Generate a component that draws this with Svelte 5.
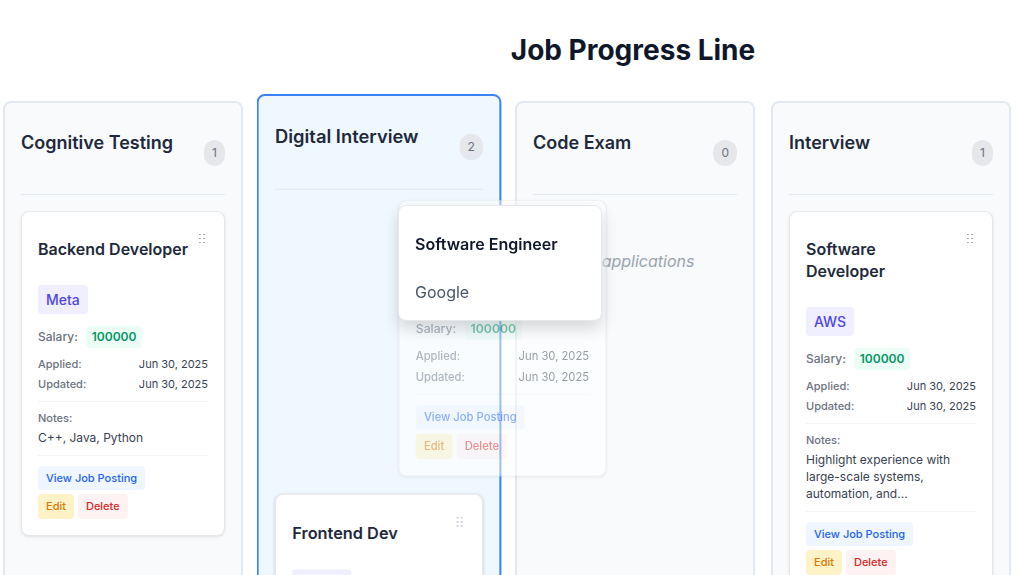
<script>
  const columns = [
    {
      title: 'Cognitive Testing',
      jobs: [
        { title: 'Backend Developer', company: 'Meta', salary: '100000', date: 'Jun 30, 2025', notes: 'C++, Java, Python' }
      ]
    },
    {
      title: 'Digital Interview',
      over: true,
      jobs: [
        { title: 'Software Engineer', company: 'Google', salary: '100000', date: 'Jun 30, 2025', dragging: true },
        { title: 'Frontend Dev', company: 'Nvidia', salary: '100000', date: 'Jun 30, 2025' }
      ]
    },
    { title: 'Code Exam', jobs: [] },
    {
      title: 'Interview',
      jobs: [
        {
          title: 'Software Developer',
          company: 'AWS',
          salary: '100000',
          date: 'Jun 30, 2025',
          notes: 'Highlight experience with large-scale systems, automation, and...'
        }
      ]
    }
  ];
</script>

<main>
  <h1>Job Progress Line</h1>
  <div class="board">
    {#each columns as column}
      <section class="column" class:over={column.over}>
        <header>
          <h2>{column.title}</h2>
          <span class="count">{column.jobs.length}</span>
        </header>
        <div class="list">
          {#each column.jobs as job}
            <article class="card" class:dragging={job.dragging}>
              <div class="card-head">
                <h3>{job.title}</h3>
                <svg class="grip" viewBox="0 0 8 10" width="8" height="10" aria-hidden="true">
                  {#each [0, 4, 8] as y}
                    <rect x="1" {y} width="2" height="1" />
                    <rect x="5" {y} width="2" height="1" />
                  {/each}
                </svg>
              </div>
              <span class="company">{job.company}</span>
              <div class="salary">
                <span>Salary:</span>
                <strong>{job.salary}</strong>
              </div>
              <dl>
                <div><dt>Applied:</dt><dd>{job.date}</dd></div>
                <div><dt>Updated:</dt><dd>{job.date}</dd></div>
              </dl>
              {#if job.notes}
                <div class="notes">
                  <span>Notes:</span>
                  <p>{job.notes}</p>
                </div>
              {/if}
              <div class="actions">
                <a href="#posting">View Job Posting</a>
                <div class="buttons">
                  <button class="edit" type="button">Edit</button>
                  <button class="delete" type="button">Delete</button>
                </div>
              </div>
            </article>
          {:else}
            <p class="empty">No applications</p>
          {/each}
        </div>
      </section>
    {/each}
    <div class="drag-preview">
      <h3>Software Engineer</h3>
      <p>Google</p>
    </div>
  </div>
</main>

<style>
  :global(html) {
    overflow: hidden;
  }
  :global(body) {
    margin: 0;
    background: #fff;
    font-family: Inter, 'Liberation Sans', sans-serif;
  }
  h1, h2, h3, p, dl, dd {
    margin: 0;
  }
  main {
    padding: 32px 7px 0 3px;
  }
  h1 {
    margin: 0 0 33px 252px;
    font-size: 28px;
    line-height: 36px;
    font-weight: 700;
    text-align: center;
    color: #0f172a;
  }
  .board {
    position: relative;
    display: grid;
    grid-template-columns: repeat(4, minmax(0, 1fr));
    gap: 16px;
  }
  .column {
    box-sizing: border-box;
    min-height: 700px;
    padding: 16px;
    border: 2px solid #e2e8f0;
    border-radius: 8px;
    background: #f8fafc;
  }
  .over {
    z-index: 1;
    border-color: #3b82f6;
    background: #f0f8ff;
    transform: scale(1.02);
  }
  header {
    display: flex;
    align-items: center;
    justify-content: space-between;
    padding-bottom: 8px;
    margin-bottom: 16px;
    border-bottom: 1px solid #e2e8f0;
  }
  h2 {
    margin: 10px 0 30px;
    font-size: 18px;
    line-height: 27px;
    font-weight: 600;
    color: #1e293b;
  }
  .count {
    padding: 4px 8px;
    border-radius: 12px;
    background: #e5e7eb;
    font-size: 12px;
    line-height: 18px;
    color: #6b7280;
  }
  .list {
    display: flex;
    flex-direction: column;
    gap: 11px;
  }
  .card {
    padding: 16px;
    border: 1px solid #e5e7eb;
    border-radius: 8px;
    background: #fff;
    box-shadow: 0 1px 3px rgba(0, 0, 0, 0.1);
  }
  .dragging {
    opacity: 0.5;
    transform: translate(121px, -6px);
  }
  .card-head {
    display: flex;
    justify-content: space-between;
    gap: 8px;
    margin-bottom: 25px;
  }
  h3 {
    font-size: 16px;
    line-height: 22px;
    font-weight: 600;
    color: #1e293b;
  }
  .card-head h3 {
    margin-top: 10px;
  }
  .grip {
    flex: none;
    margin: 6px 2px 0 0;
    fill: #a3adbd;
  }
  .company {
    display: block;
    width: fit-content;
    padding: 6px 8px;
    border-radius: 4px;
    background: #f0efff;
    font-size: 14px;
    line-height: 17px;
    font-weight: 500;
    color: #4f46e5;
  }
  .salary {
    display: flex;
    align-items: center;
    gap: 8px;
    margin: 12px 0 8px;
    font-size: 12px;
    line-height: 18px;
    font-weight: 500;
    color: #6b7280;
  }
  .salary strong {
    padding: 2px 6px;
    border-radius: 4px;
    background: #ecfdf5;
    font-weight: 600;
    color: #059669;
  }
  dl {
    display: grid;
    gap: 4px;
    margin-bottom: 9px;
    font-size: 11px;
    line-height: 16px;
  }
  dl div {
    display: flex;
    justify-content: space-between;
  }
  dt, .notes span {
    font-weight: 500;
    color: #6b7280;
  }
  dd {
    color: #374151;
  }
  .notes {
    padding: 8px 0 9px;
    border-top: 1px solid #f3f4f6;
  }
  .notes span {
    display: block;
    margin-bottom: 3px;
    font-size: 11px;
    line-height: 16px;
  }
  .notes p {
    font-size: 12px;
    line-height: 17px;
    color: #374151;
  }
  .actions {
    display: grid;
    gap: 4px;
    justify-items: start;
    padding-top: 10px;
    border-top: 1px solid #f3f4f6;
  }
  .buttons {
    display: flex;
    gap: 4px;
  }
  a, button {
    padding: 4px 8px;
    border: 0;
    border-radius: 4px;
    font-family: inherit;
    font-size: 11px;
    line-height: 16px;
    font-weight: 500;
    text-decoration: none;
  }
  button {
    line-height: 17px;
  }
  a {
    background: #eff6ff;
    color: #2563eb;
  }
  .edit {
    background: #fef3c7;
    color: #d97706;
  }
  .delete {
    background: #fef2f2;
    color: #dc2626;
  }
  .empty {
    margin-top: 38px;
    font-size: 16px;
    line-height: 24px;
    font-style: italic;
    text-align: center;
    color: #9ca3af;
  }
  .drag-preview {
    position: absolute;
    z-index: 2;
    top: 104px;
    left: 395px;
    box-sizing: border-box;
    width: 204px;
    padding: 27px 16px 16px;
    border: 1px solid #e5e7eb;
    border-radius: 8px;
    background: #fff;
    box-shadow: 0 8px 16px rgba(0, 0, 0, 0.15);
  }
  .drag-preview h3 {
    color: #0f172a;
  }
  .drag-preview p {
    margin-top: 25px;
    font-size: 16px;
    line-height: 24px;
    color: #475569;
  }
</style>
